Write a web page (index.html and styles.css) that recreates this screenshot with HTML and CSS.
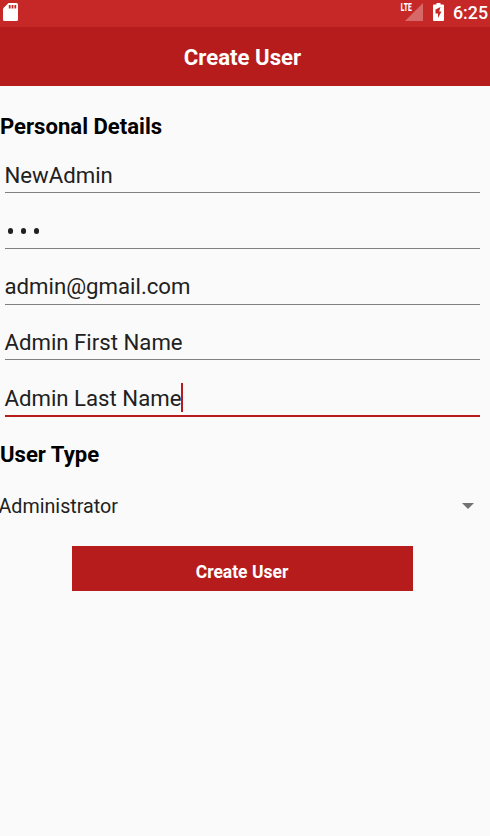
FILE: index.html
```html
<!DOCTYPE html>
<html lang="en">
<head>
<meta charset="utf-8">
<title>Create User</title>
<link rel="stylesheet" href="styles.css">
</head>
<body>
<header>
  <div class="status">
    <svg class="sd" width="15" height="18" viewBox="0 0 15 18"><path fill="#fff" d="M5.500 0h8A1.500 1.500 0 0 1 15 1.500v15a1.500 1.500 0 0 1-1.500 1.500h-12A1.500 1.500 0 0 1 0 16.500V5.500z"/><path stroke="#c62828" stroke-width="1.800" d="M6.700 2v3.500M9.500 2v3.500M12.300 2v3.500"/></svg>
    <span class="net"><span class="lte">LTE</span><svg width="18" height="18" viewBox="0 0 18 18"><path fill="#fff" fill-opacity=".3" d="M18 0v18H0z"/></svg></span>
    <svg class="bat" width="11" height="18" viewBox="0 0 11 18"><path fill="#fff" d="M3.500 0h4v1.500H10a1 1 0 0 1 1 1V17a1 1 0 0 1-1 1H1a1 1 0 0 1-1-1V2.500a1 1 0 0 1 1-1h2.500z"/><path fill="#c62828" d="M7.500 4L2.500 6.500V10.500H5V15L8.500 8.500H6.200z"/></svg>
    <span class="time">6:25</span>
  </div>
  <h1>Create User</h1>
</header>
<main>
  <h2>Personal Details</h2>
  <div class="field first"><span>NewAdmin</span></div>
  <div class="field"><span class="dots"><i></i><i></i><i></i></span></div>
  <div class="field email"><span>admin@gmail.com</span></div>
  <div class="field name"><span>Admin First Name</span></div>
  <div class="field active"><span>Admin Last Name</span><b class="caret"></b></div>
  <h2 class="type">User Type</h2>
  <div class="select"><span>Administrator</span><svg width="12" height="6" viewBox="0 0 12 6"><path fill="#737373" d="M0 0h12L6 6z"/></svg></div>
  <button>Create User</button>
</main>
</body>
</html>
```
FILE: styles.css
```css
* { box-sizing: border-box; }
body { margin: 0; height: 836px; background: #fafafa; color: #212121; font-family: Roboto, sans-serif; overflow: hidden; }
.status { display: flex; height: 27px; padding: 3px 2px 0 2.500px; background: #c62828; color: #fff; }
.net { display: flex; margin-left: auto; }
.lte { width: 12px; margin-right: -7px; font-size: 11px; line-height: 9px; font-weight: 900; transform: translateX(.8px) scaleX(.6); transform-origin: 0 0; }
.bat { margin: 0 9px 0 10px; }
.time { font-size: 17.800px; line-height: 20px; font-weight: 500; }
h1 { height: 59px; margin: 0; padding-right: 5px; background: #b71c1c; color: #fff; font-size: 22.200px; line-height: 61px; text-align: center; }
h2 { margin: 0; color: #000; font-size: 22.100px; line-height: 26px; }
main { padding-top: 27px; }
.field { display: flex; align-items: center; height: 39px; margin: 0 10px 17px 4.500px; padding-top: 4px; border-bottom: 1px solid #808080; font-size: 22.200px; }
.field.first { margin-top: 15px; }
.field.email { padding-top: 2px; margin-bottom: 16px; }
.field.name { margin-bottom: 18px; }
.field.active { padding-top: 2px; border-bottom: 2px solid #b71c1c; }
.dots { display: flex; gap: 8px; margin-left: 3px; }
.dots i { width: 5.300px; height: 5.300px; border-radius: 50%; background: #212121; }
.caret { width: 2px; height: 29px; background: #b71c1c; }
.type { margin-top: 24px; }
.select { display: flex; align-items: center; justify-content: space-between; height: 30px; margin: 24px 16px 25px -1.500px; font-size: 19.700px; }
button { display: block; width: 341px; height: 45px; margin-left: 72px; padding: 6px 1px 0 0; border: 0; background: #b71c1c; color: #fff; font: 700 17.500px Roboto, sans-serif; }
```
